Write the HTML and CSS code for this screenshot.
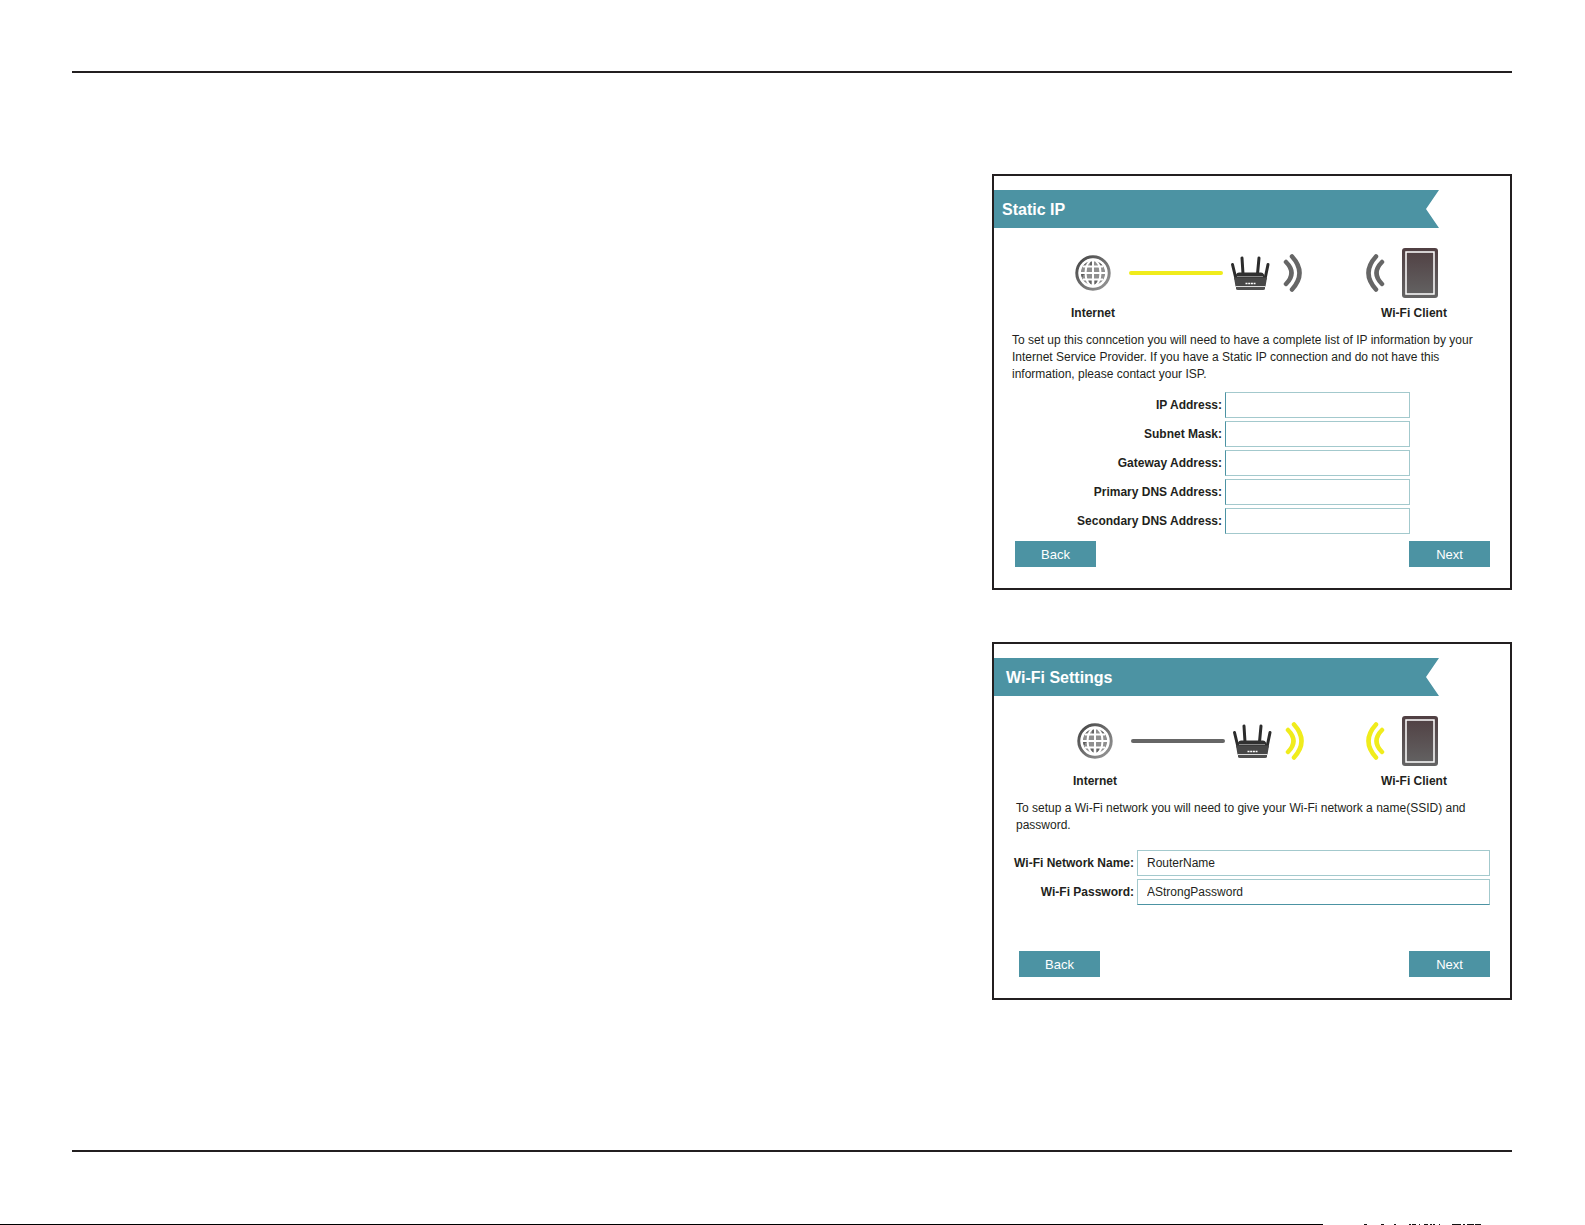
FILE: index.html
```html
<!DOCTYPE html>
<html lang="en">
<head>
  <meta charset="UTF-8">
  <meta name="viewport" content="width=device-width, initial-scale=1.0">
  <title>Router Setup</title>
  <link rel="stylesheet" href="styles.css">
</head>
<body>
  <!-- shared icons -->
  <svg class="icon-defs" aria-hidden="true">
    <defs>
      <linearGradient id="ring" x1="0" y1="0" x2="1" y2="1">
        <stop offset="0" stop-color="#444"/>
        <stop offset="1" stop-color="#999"/>
      </linearGradient>
      <linearGradient id="glass" x1="0" y1="0" x2="0" y2="1">
        <stop offset="0" stop-color="#503f42"/>
        <stop offset="1" stop-color="#646464"/>
      </linearGradient>
    </defs>
    <symbol id="globe" viewBox="0 0 36 36">
      <circle cx="18" cy="18" r="16.2" fill="#fff" stroke="url(#ring)" stroke-width="3"/>
      <circle cx="18" cy="18" r="12.5" fill="#8f8f8f"/>
      <path d="M8 11a12 12 0 0 1 8-5v6M20 6a12 12 0 0 1 7 4M7 22v-3h4M15 24v6M21 24v6" fill="none" stroke="#555" stroke-width="1.5"/>
      <g fill="none" stroke="#fff" stroke-width="2">
        <circle cx="18" cy="18" r="13.2"/>
        <ellipse cx="18" cy="18" rx="7.500" ry="13"/>
        <path d="M18 4v28M4 18h28M8 11.500h20M8 24.500h20"/>
      </g>
    </symbol>
    <symbol id="router" viewBox="0 0 40 36">
      <g fill="none" stroke="#2c2c2c" stroke-linecap="round">
        <path d="M2.500 9.500L6 24" stroke-width="3"/>
        <path d="M12 3l1 16" stroke-width="3"/>
        <path d="M29 3l-1.500 16" stroke-width="3"/>
        <path d="M38 9.500L35 24" stroke-width="3"/>
      </g>
      <path d="M9 17.500h22q2 0 3 2l1.500 4h-31l1.500-4q1-2 3-2z" fill="#303030"/>
      <path d="M7 21.500h26" stroke="#888" stroke-width="1"/>
      <path d="M4 22.500h33l-1.500 9H5.500z" fill="#474747"/>
      <path d="M5.500 31.500h30" stroke="#ddd" stroke-width="1"/>
      <path d="M6 32h29v1.500q0 1.500-2 1.500H8q-2 0-2-1.500z" fill="#505050"/>
      <path d="M15.500 28.500h10" stroke="#fff" stroke-width="1.500" stroke-dasharray="2 .7"/>
    </symbol>
    <symbol id="waves" viewBox="0 0 20 38">
      <path d="M3 8q11 11 0 22M9 2.500q15 16.500 0 33" fill="none" stroke="currentColor" stroke-width="4.500" stroke-linecap="round"/>
    </symbol>
    <symbol id="tablet" viewBox="0 0 36 50">
      <rect width="36" height="50" rx="3" fill="url(#glass)"/>
      <rect x="4" y="4" width="28" height="42" fill="none" stroke="#fff" stroke-width="1.500"/>
    </symbol>
  </svg>

  <div class="page">
    <main class="content">
      <section class="panel">
        <h2 class="ribbon">Static IP</h2>
        <div class="panel-body">
          <div class="diagram">
            <div class="device">
              <svg class="globe"><use href="#globe"/></svg>
              <span>Internet</span>
            </div>
            <div class="cable active"></div>
            <svg class="router"><use href="#router"/></svg>
            <svg class="waves"><use href="#waves"/></svg>
            <svg class="waves incoming"><use href="#waves"/></svg>
            <div class="device client">
              <svg class="tablet"><use href="#tablet"/></svg>
              <span>Wi-Fi Client</span>
            </div>
          </div>
          <p>To set up this conncetion you will need to have a complete list of IP information by your Internet Service Provider. If you have a Static IP connection and do not have this information, please contact your ISP.</p>
          <form class="fields ip-fields">
            <label for="ip">IP Address:</label>
            <input type="text" id="ip">
            <label for="mask">Subnet Mask:</label>
            <input type="text" id="mask">
            <label for="gateway">Gateway Address:</label>
            <input type="text" id="gateway">
            <label for="dns1">Primary DNS Address:</label>
            <input type="text" id="dns1">
            <label for="dns2">Secondary DNS Address:</label>
            <input type="text" id="dns2">
          </form>
          <div class="buttons">
            <button type="button">Back</button>
            <button type="button">Next</button>
          </div>
        </div>
      </section>

      <section class="panel wifi">
        <h2 class="ribbon">Wi-Fi Settings</h2>
        <div class="panel-body">
          <div class="diagram">
            <div class="device">
              <svg class="globe"><use href="#globe"/></svg>
              <span>Internet</span>
            </div>
            <div class="cable"></div>
            <svg class="router"><use href="#router"/></svg>
            <svg class="waves active"><use href="#waves"/></svg>
            <svg class="waves incoming active"><use href="#waves"/></svg>
            <div class="device client">
              <svg class="tablet"><use href="#tablet"/></svg>
              <span>Wi-Fi Client</span>
            </div>
          </div>
          <p>To setup a Wi-Fi network you will need to give your Wi-Fi network a name(SSID) and password.</p>
          <form class="fields wifi-fields">
            <label for="ssid">Wi-Fi Network Name:</label>
            <input type="text" id="ssid" value="RouterName">
            <label for="password">Wi-Fi Password:</label>
            <input type="text" id="password" value="AStrongPassword">
          </form>
          <div class="buttons">
            <button type="button">Back</button>
            <button type="button">Next</button>
          </div>
        </div>
      </section>
    </main>
  </div>
  <footer class="edge">
    <div class="edge-line"></div>
    <svg class="edge-marks" viewBox="0 0 262 1" aria-hidden="true">
      <path d="M41 .5h3M58 .5h3M71 .5h2M86 .5h2M89 .5h4M96 .5h1M101 .5h4M107 .5h2M110 .5h2M116 .5h1M129 .5h9M140 .5h2M144 .5h7M152 .5h6" stroke="#111"/>
    </svg>
  </footer>
</body>
</html>
```
FILE: styles.css
```css
* {
  box-sizing: border-box;
}

body {
  font-family: "Liberation Sans", Arial, sans-serif;
  font-size: 12px;
  line-height: 17px;
  color: #231f20;
  margin: 0;
  min-height: 100vh;
  display: flex;
  flex-direction: column;
  background-color: #fff;
}

.icon-defs {
  position: absolute;
  width: 0;
  height: 0;
}

.page {
  flex: 1;
  display: flex;
  margin: 71px 73px 72px 72px;
  border-top: 2px solid #231f20;
  border-bottom: 2px solid #231f20;
}

.content {
  flex: 1;
  display: flex;
  flex-direction: column;
  align-items: flex-end;
  gap: 52px;
  padding: 101px 0;
}

.panel {
  width: 520px;
  max-width: 100%;
  border: 2px solid #231f20;
  padding: 14px 0 21px;
}

.ribbon {
  margin: 0 71px 0 0;
  padding: 1px 8px 0;
  font-size: 16px;
  line-height: 37px;
  color: #fff;
  background-color: #4c93a3;
  clip-path: polygon(0 0, 100% 0, calc(100% - 13px) 50%, 100% 100%, 0 100%);
}

.panel-body {
  padding: 20px 20px 0 18px;
}

.diagram {
  display: flex;
  align-items: flex-start;
  height: 84px;
  padding: 0 52px 0 53px;
}

.diagram svg {
  display: block;
}

.device {
  display: flex;
  flex-direction: column;
  align-items: center;
  justify-content: space-between;
  width: 56px;
  height: 74px;
  padding-top: 7px;
  font-weight: bold;
  white-space: nowrap;
}

.client {
  width: 48px;
  padding-top: 0;
}

.globe {
  width: 36px;
  height: 36px;
}

.cable {
  width: 94px;
  height: 4px;
  margin: 23px 7px 0 8px;
  border-radius: 2px;
  background-color: #666;
}

.cable.active {
  background-color: #f0ec1c;
}

.router {
  width: 40px;
  height: 36px;
  margin-top: 7px;
}

.waves {
  width: 20px;
  height: 38px;
  margin: 6px 0 0 13px;
  color: #666;
}

.waves.active {
  color: #f0ec1c;
}

.waves.incoming {
  margin-left: auto;
  margin-right: 5px;
  transform: scaleX(-1);
}

.tablet {
  width: 36px;
  height: 50px;
  align-self: flex-end;
}

p {
  margin: 0;
}

.fields {
  display: grid;
  align-items: center;
  gap: 3px;
}

.ip-fields {
  grid-template-columns: 1fr 185px;
  margin: 9px 80px 0 0;
}

.wifi-fields {
  grid-template-columns: 118px 1fr;
  margin-top: 16px;
}

label {
  font-weight: bold;
  white-space: nowrap;
  justify-self: end;
}

input {
  width: 100%;
  height: 26px;
  padding: 0 9px;
  border: 1px solid #a3c9cd;
  font: inherit;
  color: #231f20;
}

.ip-fields input {
  border-left-color: #4c93a3;
}

.buttons {
  display: flex;
  justify-content: space-between;
  margin: 7px 0 0 3px;
}

button {
  width: 81px;
  height: 26px;
  padding: 0;
  border: none;
  font-family: inherit;
  font-size: 13px;
  color: #fff;
  background-color: #4c93a3;
  cursor: pointer;
}

button:hover {
  background-color: #3c7f8e;
}

.wifi .ribbon {
  padding-left: 12px;
}

.wifi .panel-body {
  padding-left: 22px;
}

.wifi .diagram {
  padding-left: 51px;
}

.wifi .buttons {
  margin-top: 46px;
}

.wifi #password {
  border-bottom-color: #4c93a3;
}

.edge {
  display: flex;
  height: 1px;
}

.edge-line {
  flex: 1;
  background-color: #000;
}

.edge-marks {
  width: 262px;
  height: 1px;
}
```
